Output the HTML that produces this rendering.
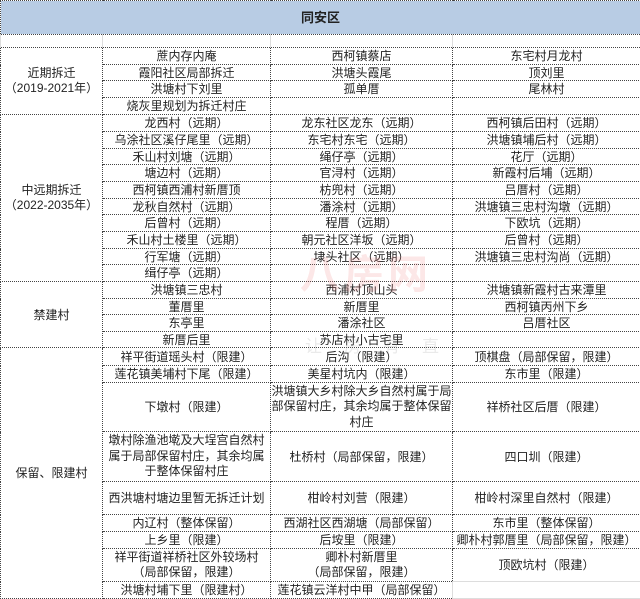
<!DOCTYPE html>
<html><head><meta charset="utf-8">
<style>
html,body{margin:0;padding:0;background:#fff;width:640px;height:599px;overflow:hidden;}
body{font-family:"Liberation Sans","Noto Sans CJK SC",sans-serif;font-size:12px;color:#222;position:relative;}
table{border-collapse:collapse;table-layout:fixed;width:640px;position:absolute;left:0;top:0;}
td{border:1px dotted #444;padding:0;text-align:center;vertical-align:middle;line-height:14px;white-space:nowrap;overflow:hidden;}
td.w{white-space:normal;line-height:15.5px;word-break:break-all;}
td.m{line-height:15.5px;}
.hd{background:#b8cce4;font-weight:bold;font-size:13px;}
.e td{border-left:1px solid #ddd;border-right:1px solid #ddd;line-height:10px;font-size:8px;}
.wm{position:absolute;left:300px;top:242px;font-size:40px;color:rgba(240,120,120,0.18);font-weight:bold;letter-spacing:4px;}
.wm2{position:absolute;left:305px;top:332px;font-size:17px;color:rgba(150,150,150,0.2);letter-spacing:22px;}
</style></head><body>
<table>
<colgroup><col style="width:102px"><col style="width:168px"><col style="width:182px"><col style="width:188px"></colgroup>
<tr style="height:34px"><td colspan="4" class="hd">同安区</td></tr>
<tr class="e" style="height:13px"><td></td><td></td><td></td><td></td></tr>
<tr style="height:17px"><td rowspan="4" class="m">近期拆迁<br>（2019-2021年）</td><td>蔗内存内庵</td><td>西柯镇蔡店</td><td>东宅村月龙村</td></tr>
<tr style="height:16px"><td>霞阳社区局部拆迁</td><td>洪塘头霞尾</td><td>顶刘里</td></tr>
<tr style="height:17px"><td>洪塘村下刘里</td><td>孤单厝</td><td>尾林村</td></tr>
<tr style="height:17px"><td>烧灰里规划为拆迁村庄</td><td></td><td></td></tr>
<tr style="height:17px"><td rowspan="10" class="m">中远期拆迁<br>（2022-2035年）</td><td>龙西村（远期）</td><td>龙东社区龙东（远期）</td><td>西柯镇后田村（远期）</td></tr>
<tr style="height:17px"><td>乌涂社区溪仔尾里（远期）</td><td>东宅村东宅（远期）</td><td>洪塘镇埔后村（远期）</td></tr>
<tr style="height:16px"><td>禾山村刘塘（远期）</td><td>绳仔亭（远期）</td><td>花厅（远期）</td></tr>
<tr style="height:17px"><td>塘边村（远期）</td><td>官浔村（远期）</td><td>新霞村后埔（远期）</td></tr>
<tr style="height:17px"><td>西柯镇西浦村新厝顶</td><td>枋兜村（远期）</td><td>吕厝村（远期）</td></tr>
<tr style="height:16px"><td>龙秋自然村（远期）</td><td>潘涂村（远期）</td><td>洪塘镇三忠村沟墩（远期）</td></tr>
<tr style="height:17px"><td>后曾村（远期）</td><td>程厝（远期）</td><td>下欧坑（远期）</td></tr>
<tr style="height:17px"><td>禾山村土楼里（远期）</td><td>朝元社区洋坂（远期）</td><td>后曾村（远期）</td></tr>
<tr style="height:16px"><td>行军塘（远期）</td><td>埭头社区（远期）</td><td>洪塘镇三忠村沟尚（远期）</td></tr>
<tr style="height:17px"><td>缉仔亭（远期）</td><td></td><td></td></tr>
<tr style="height:17px"><td rowspan="4">禁建村</td><td>洪塘镇三忠村</td><td>西浦村顶山头</td><td>洪塘镇新霞村古来潭里</td></tr>
<tr style="height:16px"><td>董厝里</td><td>新厝里</td><td>西柯镇丙州下乡</td></tr>
<tr style="height:17px"><td>东亭里</td><td>潘涂社区</td><td>吕厝社区</td></tr>
<tr style="height:16px"><td>新厝后里</td><td>苏店村小古宅里</td><td></td></tr>
<tr style="height:18px"><td rowspan="9">保留、限建村</td><td>祥平街道瑶头村（限建）</td><td>后沟（限建）</td><td>顶棋盘（局部保留，限建）</td></tr>
<tr style="height:17px"><td>莲花镇美埔村下尾（限建）</td><td>美星村坑内（限建）</td><td>东市里（限建）</td></tr>
<tr style="height:49px"><td>下墩村（限建）</td><td class="w">洪塘镇大乡村除大乡自然村属于局部保留村庄，其余均属于整体保留村庄</td><td>祥桥社区后厝（限建）</td></tr>
<tr style="height:50px"><td class="w">墩村除渔池墘及大埕宫自然村属于局部保留村庄，其余均属于整体保留村庄</td><td>杜桥村（局部保留，限建）</td><td>四口圳（限建）</td></tr>
<tr style="height:33px"><td>西洪塘村塘边里暂无拆迁计划</td><td>柑岭村刘营（限建）</td><td>柑岭村深里自然村（限建）</td></tr>
<tr style="height:17px"><td>内辽村（整体保留）</td><td>西湖社区西湖塘（局部保留）</td><td>东市里（整体保留）</td></tr>
<tr style="height:17px"><td>上乡里（限建）</td><td>后垵里（限建）</td><td>卿朴村郭厝里（局部保留，限建）</td></tr>
<tr style="height:33px"><td class="m">祥平街道祥桥社区外较场村<br>（局部保留，限建）</td><td class="m">卿朴村新厝里<br>（局部保留，限建）</td><td>顶欧坑村（限建）</td></tr>
<tr style="height:17px"><td>洪塘村埔下里（限建村）</td><td>莲花镇云洋村中甲（局部保留）</td><td style="border:1px solid #ddd"></td></tr>
</table>
<div class="wm">八房网</div>
<div class="wm2">让房有直</div>
</body></html>
